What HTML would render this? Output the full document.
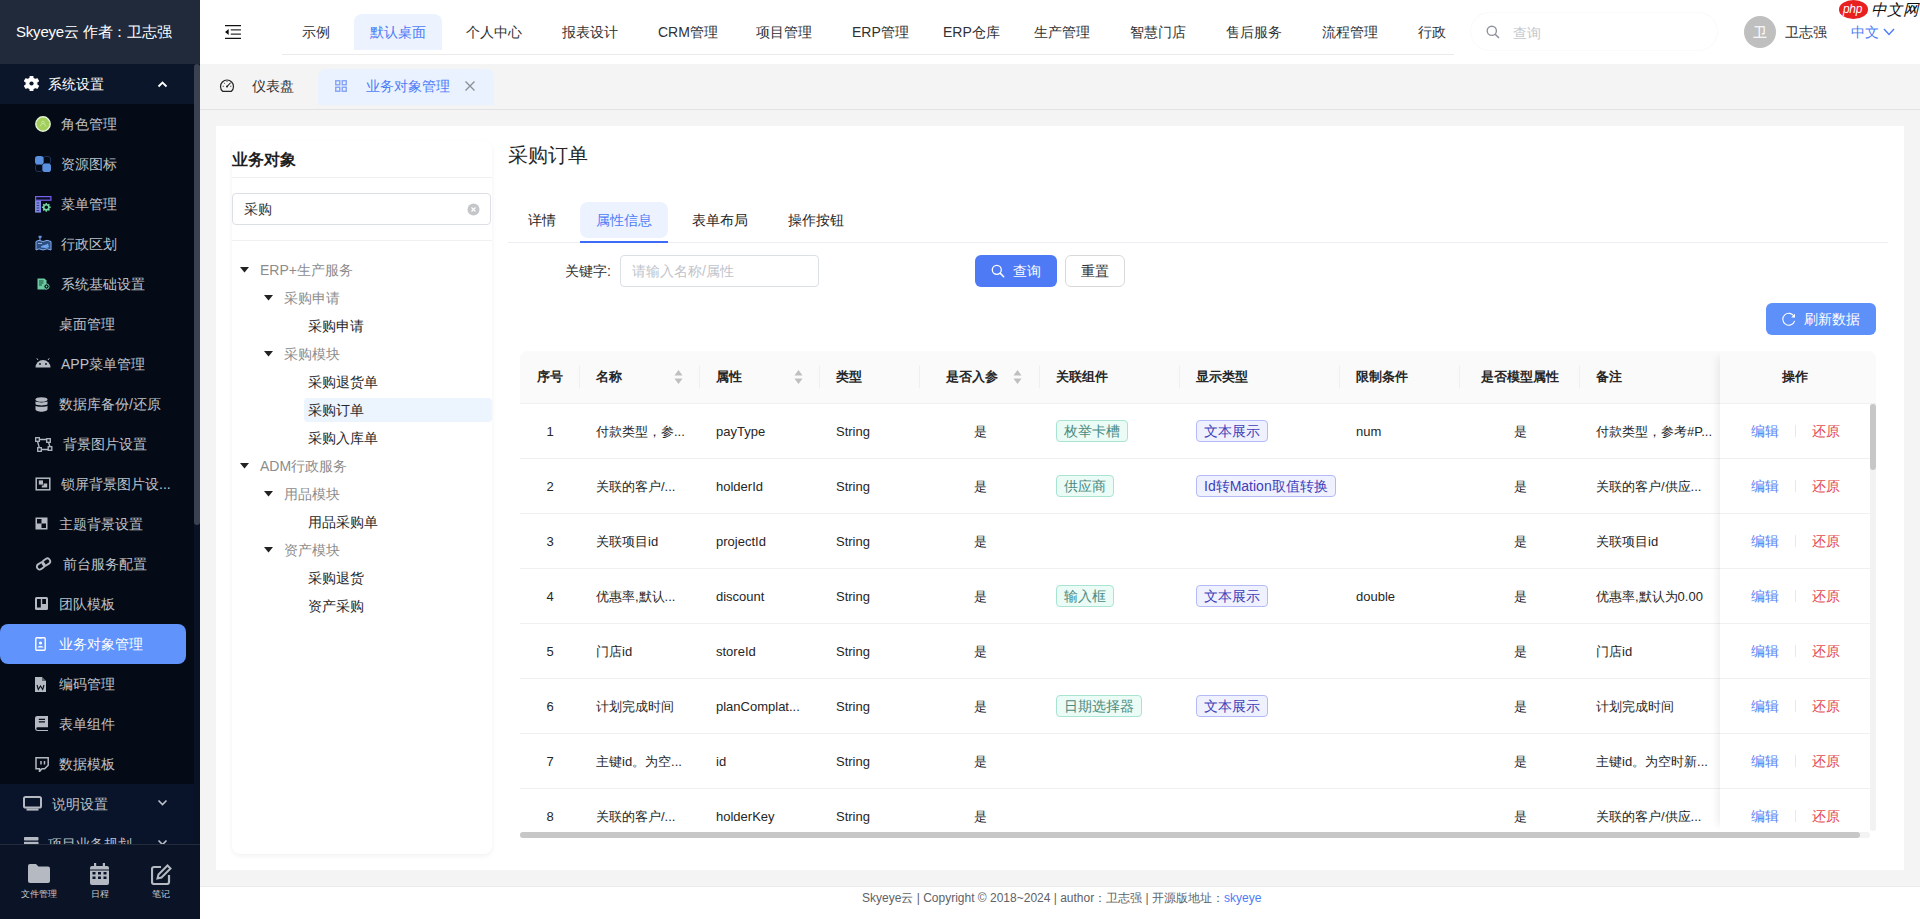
<!DOCTYPE html><html><head><meta charset="utf-8"><style>
*{box-sizing:border-box;margin:0;padding:0}
html,body{width:1920px;height:919px;overflow:hidden;background:#f4f4f4;font-family:"Liberation Sans",sans-serif;color:#303133}
.abs{position:absolute}
.t{position:absolute;white-space:nowrap;line-height:1}
svg{position:absolute;display:block}
</style></head><body>
<div class="abs" style="left:0;top:0;width:200px;height:919px;background:#050b16"></div>
<div class="abs" style="left:0;top:0;width:200px;height:64px;background:#212a3b"></div>
<div class="t" style="left:16px;top:24px;font-size:15px;color:#fff;letter-spacing:-0.2px">Skyeye云 作者：卫志强</div>
<div class="abs" style="left:0;top:64px;width:194px;height:40px;background:#0b162b"></div>
<svg style="left:23.5px;top:76px" width="15" height="15" viewBox="0 0 15 15"><path fill="#fff" stroke="#fff" stroke-width="1.2" stroke-linejoin="round" d="M5.97 2.32 L6.23 0.21 L8.77 0.21 L9.03 2.32 L11.22 3.58 L13.18 2.75 L14.45 4.96 L12.75 6.24 L12.75 8.76 L14.45 10.04 L13.18 12.25 L11.22 11.42 L9.03 12.68 L8.77 14.79 L6.23 14.79 L5.97 12.68 L3.78 11.42 L1.82 12.25 L0.55 10.04 L2.25 8.76 L2.25 6.24 L0.55 4.96 L1.82 2.75 L3.78 3.58Z"/><circle cx="7.5" cy="7.5" r="2.1" fill="#0b162b"/></svg>
<div class="t" style="left:48px;top:77px;font-size:14px;color:#fff">系统设置</div>
<svg style="left:157px;top:80px" width="11" height="8" viewBox="0 0 11 8"><path d="M1.5 6.5 L5.5 2.5 L9.5 6.5" stroke="#fff" stroke-width="1.8" fill="none"/></svg>
<svg style="left:35px;top:116px" width="16" height="16" viewBox="0 0 16 16"><circle cx="8" cy="8" r="7.2" fill="#a2cf5c" stroke="#e4f3d2" stroke-width="1.4"/><path d="M8 5.2a1.3 1.3 0 1 1 0 2.6a1.3 1.3 0 1 1 0-2.6M6.8 7.6L5 10.5M9.2 7.6L11 10.5" stroke="#d8edbf" stroke-width=".7" fill="none"/></svg>
<div class="t" style="left:61px;top:117px;font-size:14px;color:#bdc1c9">角色管理</div>
<svg style="left:35px;top:156px" width="16" height="16" viewBox="0 0 16 16"><rect x="8" y=".5" width="7.5" height="7.5" rx="2.5" fill="none" stroke="#1f3558" stroke-width="1"/><rect x=".5" y="8" width="7.5" height="7.5" rx="2.5" fill="none" stroke="#1f3558" stroke-width="1"/><rect x="0" y="0" width="8.6" height="8.6" rx="2.8" fill="#5a90de"/><rect x="7.4" y="7.4" width="8.6" height="8.6" rx="2.8" fill="#5a90de"/></svg>
<div class="t" style="left:61px;top:157px;font-size:14px;color:#bdc1c9">资源图标</div>
<svg style="left:35px;top:196px" width="17" height="17" viewBox="0 0 17 17"><rect x=".6" y=".6" width="15.3" height="3.6" fill="#081025" stroke="#7a5ff0" stroke-width="1.2"/><rect x="0" y="4.6" width="6" height="12" fill="#7d88e6"/><path d="M1.6 7h2.6M1.6 9.5h2.6M1.6 12h2.6M1.6 14.5h2.6" stroke="#2d3270" stroke-width=".9"/><circle cx="11.3" cy="11.3" r="2.6" fill="none" stroke="#74d6a4" stroke-width="1.6"/><g stroke="#74d6a4" stroke-width="1.5"><path d="M11.3 6.9v1.6M11.3 14.1v1.6M6.9 11.3h1.6M14.1 11.3h1.6M8.2 8.2l1.1 1.1M13.3 13.3l1.1 1.1M8.2 14.4l1.1-1.1M13.3 9.3l1.1-1.1"/></g></svg>
<div class="t" style="left:61px;top:197px;font-size:14px;color:#bdc1c9">菜单管理</div>
<svg style="left:35px;top:235px" width="17" height="17" viewBox="0 0 17 17"><path d="M5 1.5v4" stroke="#6e9be0" stroke-width="1.2"/><rect x="3.6" y="0.8" width="3" height="2" fill="#6e9be0"/><path d="M1 6.5l3-1.2 4 1.2 4-1.2 4 1.2v8.5l-4-1.2-4 1.2-4-1.2-3 1.2z" fill="#2e4f80" stroke="#86aef0" stroke-width="1"/><path d="M6 11.5c2-2 5-1 7-3l1 3.5c-2 1.5-5 1-8 .5z" fill="#6fa6ee"/><path d="M3 8.5h4" stroke="#a6c6f5" stroke-width=".8"/></svg>
<div class="t" style="left:61px;top:237px;font-size:14px;color:#bdc1c9">行政区划</div>
<svg style="left:37px;top:278px" width="13" height="12" viewBox="0 0 13 12"><path d="M0.5 0.5h7l2 2v9h-9z" fill="#6dcba3"/><path d="M2 3h4.5M2 5h4.5M2 7h3" stroke="#0b3a2a" stroke-width=".9"/><circle cx="9.5" cy="8.5" r="2.6" fill="#050b16" stroke="#6dcba3" stroke-width="1"/><circle cx="9.5" cy="8.5" r=".9" fill="#6dcba3"/></svg>
<div class="t" style="left:61px;top:277px;font-size:14px;color:#bdc1c9">系统基础设置</div>
<div class="t" style="left:59px;top:317px;font-size:14px;color:#bdc1c9">桌面管理</div>
<svg style="left:35px;top:358px" width="16" height="10" viewBox="0 0 16 10"><path d="M0.5 9.5a7.5 7.5 0 0 1 15 0z" fill="#b5b9c1"/><path d="M3 2L1.8 .3M13 2l1.2-1.7" stroke="#b5b9c1" stroke-width="1"/><circle cx="5" cy="6" r=".9" fill="#050b16"/><circle cx="11" cy="6" r=".9" fill="#050b16"/></svg>
<div class="t" style="left:61px;top:357px;font-size:14px;color:#bdc1c9">APP菜单管理</div>
<svg style="left:35px;top:397px" width="13" height="15" viewBox="0 0 13 15"><ellipse cx="6.5" cy="2.5" rx="6" ry="2.3" fill="#b5b9c1"/><path d="M.5 4.3c1 1.5 11 1.5 12 0v3c-1 1.5-11 1.5-12 0z" fill="#b5b9c1"/><path d="M.5 8.7c1 1.5 11 1.5 12 0v3.5c0 1.5-3 2.5-6 2.5s-6-1-6-2.5z" fill="#b5b9c1"/></svg>
<div class="t" style="left:59px;top:397px;font-size:14px;color:#bdc1c9">数据库备份/还原</div>
<svg style="left:35px;top:437px" width="18" height="15" viewBox="0 0 18 15"><rect x=".7" y=".7" width="3.6" height="3.6" fill="none" stroke="#b5b9c1" stroke-width="1.3"/><rect x="11.7" y="1.7" width="3.6" height="3.6" fill="none" stroke="#b5b9c1" stroke-width="1.3"/><rect x="2.7" y="10.7" width="3.6" height="3.6" fill="none" stroke="#b5b9c1" stroke-width="1.3"/><rect x="13.2" y="9.7" width="3.6" height="3.6" fill="none" stroke="#b5b9c1" stroke-width="1.3"/><path d="M4.3 2.5h7.4M2.5 4.3l1.8 6.4M6.3 12.5h6.9M13.5 5.3l1.5 4.4" stroke="#b5b9c1" stroke-width="1.3"/></svg>
<div class="t" style="left:63px;top:437px;font-size:14px;color:#bdc1c9">背景图片设置</div>
<svg style="left:35px;top:477px" width="16" height="14" viewBox="0 0 16 14"><rect x="1.2" y="1.2" width="13.6" height="11.6" fill="none" stroke="#b5b9c1" stroke-width="1.5"/><rect x="3.8" y="3.4" width="4.2" height="4.2" fill="#b5b9c1"/><path d="M8.6 6.4h3.6v4.2H6.8V8.6h1.8z" fill="#b5b9c1"/></svg>
<div class="t" style="left:61px;top:477px;font-size:14px;color:#bdc1c9">锁屏背景图片设...</div>
<svg style="left:35px;top:517px" width="13" height="13" viewBox="0 0 13 13"><rect x=".5" y=".5" width="12" height="12" fill="#b5b9c1"/><rect x="2" y="2" width="4.5" height="4.5" fill="#050b16"/><rect x="6.5" y="6.5" width="4.5" height="4.5" fill="#050b16"/></svg>
<div class="t" style="left:59px;top:517px;font-size:14px;color:#bdc1c9">主题背景设置</div>
<svg style="left:35px;top:557px" width="17" height="14" viewBox="0 0 17 14"><g transform="rotate(-35 8.5 7)" fill="none" stroke="#b5b9c1" stroke-width="1.9"><rect x="1" y="4.2" width="8.2" height="5.6" rx="2.8"/><rect x="7.8" y="4.2" width="8.2" height="5.6" rx="2.8"/></g></svg>
<div class="t" style="left:63px;top:557px;font-size:14px;color:#bdc1c9">前台服务配置</div>
<svg style="left:35px;top:597px" width="13" height="13" viewBox="0 0 13 13"><rect x="0" y="0" width="13" height="13" rx="1.5" fill="#b5b9c1"/><rect x="2" y="2" width="3.8" height="8.5" fill="#050b16"/><rect x="7.2" y="2" width="3.8" height="5" fill="#050b16"/></svg>
<div class="t" style="left:59px;top:597px;font-size:14px;color:#bdc1c9">团队模板</div>
<div class="abs" style="left:0;top:624px;width:186px;height:40px;background:#6093fb;border-radius:8px"></div>
<svg style="left:35px;top:637px" width="11" height="14" viewBox="0 0 11 14"><rect x=".8" y=".8" width="9.4" height="12.4" rx="1" fill="none" stroke="#fff" stroke-width="1.4"/><circle cx="5.5" cy="6" r="1.6" fill="#fff"/><path d="M2.5 10.5c.5-2 5.5-2 6 0z" fill="#fff"/><path d="M4 .8h3" stroke="#fff" stroke-width="1.4"/></svg>
<div class="t" style="left:59px;top:637px;font-size:14px;color:#fff">业务对象管理</div>
<svg style="left:35px;top:677px" width="11" height="15" viewBox="0 0 11 15"><path d="M0 0h7l4 4v11H0z" fill="#b5b9c1"/><path d="M7 0v4h4" fill="#050b16" opacity=".5"/><path d="M2 8l1.3 4.5 2.2-3.5 2.2 3.5L9 8" stroke="#050b16" stroke-width="1.1" fill="none"/></svg>
<div class="t" style="left:59px;top:677px;font-size:14px;color:#bdc1c9">编码管理</div>
<svg style="left:35px;top:716px" width="13" height="15" viewBox="0 0 13 15"><path d="M2.2 0H13v11.3H2.6a1.3 1.3 0 0 0 0 2.6H13V15H2.4A2.4 2.4 0 0 1 0 12.6V2.2A2.2 2.2 0 0 1 2.2 0z" fill="#b5b9c1"/><path d="M3.8 3.3h6.2M3.8 5.8h6.2" stroke="#050b16" stroke-width="1.2"/></svg>
<div class="t" style="left:59px;top:717px;font-size:14px;color:#bdc1c9">表单组件</div>
<svg style="left:35px;top:757px" width="14" height="15" viewBox="0 0 14 15"><path d="M1 .8h12.2v7.5l-3.5 3.5H7l-2.5 2.7v-2.7H1z" fill="none" stroke="#b5b9c1" stroke-width="1.5"/><path d="M6 4v3.5M9.5 4v3.5" stroke="#b5b9c1" stroke-width="1.5"/></svg>
<div class="t" style="left:59px;top:757px;font-size:14px;color:#bdc1c9">数据模板</div>
<div class="abs" style="left:0;top:784px;width:194px;height:80px;background:#09142a"></div>
<svg style="left:23px;top:796px" width="19" height="15" viewBox="0 0 19 15"><rect x="1" y="1" width="17" height="10.6" rx="1.6" fill="none" stroke="#b5b9c1" stroke-width="2"/><rect x="3.5" y="12.4" width="12" height="2.2" fill="#b5b9c1"/></svg>
<div class="t" style="left:52px;top:797px;font-size:14px;color:#bdc1c9">说明设置</div>
<svg style="left:157px;top:799px" width="11" height="8" viewBox="0 0 11 8"><path d="M1.5 1.5 L5.5 5.5 L9.5 1.5" stroke="#bdc1c9" stroke-width="1.6" fill="none"/></svg>
<svg style="left:24px;top:837px" width="15" height="8" viewBox="0 0 15 8"><rect x="0" y="0" width="14.5" height="3.6" rx=".8" fill="#b5b9c1"/><rect x="0" y="4.8" width="14.5" height="3.2" fill="#b5b9c1"/></svg>
<div class="t" style="left:48px;top:837px;font-size:14px;color:#bdc1c9">项目业务规划</div>
<svg style="left:157px;top:839px" width="11" height="8" viewBox="0 0 11 8"><path d="M1.5 1.5 L5.5 5.5 L9.5 1.5" stroke="#bdc1c9" stroke-width="1.6" fill="none"/></svg>
<div class="abs" style="left:194px;top:64px;width:6px;height:781px;background:#0a1326"></div>
<div class="abs" style="left:194px;top:64px;width:6px;height:461px;background:#3a4252;border-radius:3px"></div>
<div class="abs" style="left:0;top:844px;width:200px;height:75px;background:#0b1427;border-top:1px solid #242c3c"></div>
<svg style="left:28px;top:864px" width="22" height="19" viewBox="0 0 22 19"><path d="M0 2a2 2 0 0 1 2-2h6l2.5 2.5H20a2 2 0 0 1 2 2V17a2 2 0 0 1-2 2H2a2 2 0 0 1-2-2z" fill="#b5b9c1"/></svg>
<svg style="left:90px;top:863px" width="19" height="22" viewBox="0 0 19 22"><rect x="0" y="3" width="19" height="19" rx="2" fill="#b5b9c1"/><rect x="4" y="0" width="2.2" height="5" fill="#b5b9c1"/><rect x="12.8" y="0" width="2.2" height="5" fill="#b5b9c1"/><g fill="#0b1427"><rect x="2.5" y="9" width="3" height="2.5"/><rect x="8" y="9" width="3" height="2.5"/><rect x="13.5" y="9" width="3" height="2.5"/><rect x="2.5" y="13.5" width="3" height="2.5"/><rect x="8" y="13.5" width="3" height="2.5"/><rect x="13.5" y="13.5" width="3" height="2.5"/></g><rect x="0" y="6.5" width="19" height="1" fill="#0b1427"/></svg>
<svg style="left:151px;top:864px" width="21" height="21" viewBox="0 0 21 21"><path d="M10 3H3a2 2 0 0 0-2 2v13a2 2 0 0 0 2 2h13a2 2 0 0 0 2-2v-7" stroke="#b5b9c1" stroke-width="2.2" fill="none"/><path d="M16.5 1.5l3 3-9 9-4 1 1-4z" stroke="#b5b9c1" stroke-width="2" fill="none"/></svg>
<div class="t" style="left:21px;top:890px;font-size:9px;color:#c8ccd3">文件管理</div>
<div class="t" style="left:91px;top:890px;font-size:9px;color:#c8ccd3">日程</div>
<div class="t" style="left:152px;top:890px;font-size:9px;color:#c8ccd3">笔记</div>
<div class="abs" style="left:200px;top:0;width:1720px;height:64px;background:#fff"></div>
<svg style="left:225px;top:25px" width="16" height="14" viewBox="0 0 16 14"><path d="M0 .7h16M0 13.4h16" stroke="#111" stroke-width="1.3"/><path d="M5.8 4.8h10.2M5.8 9.2h10.2" stroke="#333" stroke-width="1.2"/><path d="M0 7l3.7-3v6z" fill="#111"/></svg>
<div class="abs" style="left:282px;top:54px;width:1172px;height:1px;background:#ebebeb"></div>
<div class="t" style="left:302px;top:25px;font-size:14px;color:#303133">示例</div>
<div class="abs" style="left:354px;top:14px;width:88px;height:36px;background:#ecf3fe;border-radius:8px 8px 0 0"></div>
<div class="t" style="left:370px;top:25px;font-size:14px;color:#4d7cf6">默认桌面</div>
<div class="t" style="left:466px;top:25px;font-size:14px;color:#303133">个人中心</div>
<div class="t" style="left:562px;top:25px;font-size:14px;color:#303133">报表设计</div>
<div class="t" style="left:658px;top:25px;font-size:14px;color:#303133">CRM管理</div>
<div class="t" style="left:756px;top:25px;font-size:14px;color:#303133">项目管理</div>
<div class="t" style="left:852px;top:25px;font-size:14px;color:#303133">ERP管理</div>
<div class="t" style="left:943px;top:25px;font-size:14px;color:#303133">ERP仓库</div>
<div class="t" style="left:1034px;top:25px;font-size:14px;color:#303133">生产管理</div>
<div class="t" style="left:1130px;top:25px;font-size:14px;color:#303133">智慧门店</div>
<div class="t" style="left:1226px;top:25px;font-size:14px;color:#303133">售后服务</div>
<div class="t" style="left:1322px;top:25px;font-size:14px;color:#303133">流程管理</div>
<div class="t" style="left:1418px;top:25px;font-size:14px;color:#303133">行政</div>
<div class="abs" style="left:1470px;top:12px;width:248px;height:39px;border:1px solid #fafafa;border-radius:20px"></div>
<svg style="left:1486px;top:25px" width="14" height="14" viewBox="0 0 14 14"><circle cx="5.8" cy="5.8" r="4.6" stroke="#8f949c" stroke-width="1.4" fill="none"/><path d="M9.2 9.2l3.8 3.8" stroke="#8f949c" stroke-width="1.6"/></svg>
<div class="t" style="left:1513px;top:26px;font-size:14px;color:#c4c7cc">查询</div>
<div class="abs" style="left:1744px;top:16px;width:32px;height:32px;border-radius:50%;background:#bfbfbf"></div>
<div class="t" style="left:1753px;top:25px;font-size:14px;color:#fff">卫</div>
<div class="t" style="left:1785px;top:25px;font-size:14px;color:#303133">卫志强</div>
<div class="t" style="left:1851px;top:25px;font-size:14px;color:#4d7cf6">中文</div>
<svg style="left:1883px;top:28px" width="12" height="8" viewBox="0 0 12 8"><path d="M1 1l5 5.5L11 1" stroke="#4d7cf6" stroke-width="1.4" fill="none"/></svg>
<div class="abs" style="left:1839px;top:0px;width:29px;height:19px;border-radius:50%;background:#e8201f"></div>
<div class="t" style="left:1843px;top:3px;font-size:12px;color:#fff;font-style:italic;letter-spacing:-0.3px">php</div>
<div class="t" style="left:1871px;top:2px;font-size:15.5px;color:#111;font-style:italic">中文网</div>
<div class="abs" style="left:200px;top:109px;width:1720px;height:1px;background:#e2e2e2"></div>
<svg style="left:219px;top:78px" width="16" height="15" viewBox="0 0 16 15"><path d="M3.6 13.3A6.5 6.5 0 1 1 12.4 13.3Z" stroke="#262626" stroke-width="1.2" fill="none" stroke-linejoin="round"/><path d="M8 8.6L11.3 5" stroke="#262626" stroke-width="1.1" stroke-linecap="round"/><circle cx="8" cy="8.6" r="1" fill="#262626"/><path d="M3.7 8.3h1M4.9 4.8l.8.7M8 3.2v.8M12.3 8.3h-1" stroke="#262626" stroke-width="1"/></svg>
<div class="t" style="left:252px;top:79px;font-size:14px;color:#303133">仪表盘</div>
<div class="abs" style="left:318px;top:69px;width:176px;height:36px;background:#e9f2fe;border-radius:8px 8px 0 0"></div>
<svg style="left:335px;top:80px" width="12" height="12" viewBox="0 0 12 12"><g fill="none" stroke="#86a3f7" stroke-width="1.4"><rect x=".75" y=".75" width="4" height="4"/><rect x="7.25" y=".75" width="4" height="4"/><rect x=".75" y="7.25" width="4" height="4"/><rect x="7.25" y="7.25" width="4" height="4"/></g></svg>
<div class="t" style="left:366px;top:79px;font-size:14px;color:#4d7cf6">业务对象管理</div>
<svg style="left:465px;top:81px" width="10" height="10" viewBox="0 0 10 10"><path d="M.5 .5l9 9M9.5 .5l-9 9" stroke="#8c8f95" stroke-width="1.3"/></svg>
<div class="abs" style="left:216px;top:126px;width:1688px;height:744px;background:#fff"></div>
<div class="abs" style="left:232px;top:141px;width:260px;height:713px;background:#fff;border-radius:8px;box-shadow:0 2px 5px rgba(0,0,0,.06)"></div>
<div class="t" style="left:232px;top:152px;font-size:16px;font-weight:bold;color:#1f1f1f">业务对象</div>
<div class="abs" style="left:232px;top:177px;width:260px;height:1px;background:#f0f0f0"></div>
<div class="abs" style="left:232px;top:193px;width:259px;height:32px;border:1px solid #dcdfe6;border-radius:4px"></div>
<div class="t" style="left:244px;top:202px;font-size:14px;color:#303133">采购</div>
<svg style="left:467px;top:203px" width="13" height="13" viewBox="0 0 13 13"><circle cx="6.5" cy="6.5" r="6" fill="#c4c6ca"/><path d="M4.5 4.5l4 4M8.5 4.5l-4 4" stroke="#fff" stroke-width="1.1"/></svg>
<div class="abs" style="left:232px;top:240px;width:260px;height:1px;background:#f0f0f0"></div>
<svg style="left:240px;top:266.5px" width="9" height="6" viewBox="0 0 9 6"><path d="M0 0h9L4.5 5.5z" fill="#222"/></svg>
<div class="t" style="left:260px;top:262.5px;font-size:14px;color:#8c8c8c">ERP+生产服务</div>
<svg style="left:264px;top:294.5px" width="9" height="6" viewBox="0 0 9 6"><path d="M0 0h9L4.5 5.5z" fill="#222"/></svg>
<div class="t" style="left:284px;top:290.5px;font-size:14px;color:#8c8c8c">采购申请</div>
<div class="t" style="left:308px;top:318.5px;font-size:14px;color:#262626">采购申请</div>
<svg style="left:264px;top:350.5px" width="9" height="6" viewBox="0 0 9 6"><path d="M0 0h9L4.5 5.5z" fill="#222"/></svg>
<div class="t" style="left:284px;top:346.5px;font-size:14px;color:#8c8c8c">采购模块</div>
<div class="t" style="left:308px;top:374.5px;font-size:14px;color:#262626">采购退货单</div>
<div class="abs" style="left:304px;top:397.5px;width:188px;height:24px;background:#ecf4fe;border-radius:4px"></div>
<div class="t" style="left:308px;top:402.5px;font-size:14px;color:#262626">采购订单</div>
<div class="t" style="left:308px;top:430.5px;font-size:14px;color:#262626">采购入库单</div>
<svg style="left:240px;top:462.5px" width="9" height="6" viewBox="0 0 9 6"><path d="M0 0h9L4.5 5.5z" fill="#222"/></svg>
<div class="t" style="left:260px;top:458.5px;font-size:14px;color:#8c8c8c">ADM行政服务</div>
<svg style="left:264px;top:490.5px" width="9" height="6" viewBox="0 0 9 6"><path d="M0 0h9L4.5 5.5z" fill="#222"/></svg>
<div class="t" style="left:284px;top:486.5px;font-size:14px;color:#8c8c8c">用品模块</div>
<div class="t" style="left:308px;top:514.5px;font-size:14px;color:#262626">用品采购单</div>
<svg style="left:264px;top:546.5px" width="9" height="6" viewBox="0 0 9 6"><path d="M0 0h9L4.5 5.5z" fill="#222"/></svg>
<div class="t" style="left:284px;top:542.5px;font-size:14px;color:#8c8c8c">资产模块</div>
<div class="t" style="left:308px;top:570.5px;font-size:14px;color:#262626">采购退货</div>
<div class="t" style="left:308px;top:598.5px;font-size:14px;color:#262626">资产采购</div>
<div class="t" style="left:508px;top:145px;font-size:20px;color:#262626">采购订单</div>
<div class="abs" style="left:508px;top:242px;width:1380px;height:1px;background:#eceef2"></div>
<div class="t" style="left:528px;top:213px;font-size:14px;color:#262626">详情</div>
<div class="abs" style="left:580px;top:202px;width:88px;height:36px;background:#ecf3fe;border-radius:8px"></div>
<div class="abs" style="left:580px;top:241px;width:88px;height:2px;background:#3d6af7"></div>
<div class="t" style="left:596px;top:213px;font-size:14px;color:#4d7cf6">属性信息</div>
<div class="t" style="left:692px;top:213px;font-size:14px;color:#262626">表单布局</div>
<div class="t" style="left:788px;top:213px;font-size:14px;color:#262626">操作按钮</div>
<div class="t" style="left:565px;top:264px;font-size:14px;color:#303133">关键字:</div>
<div class="abs" style="left:620px;top:255px;width:199px;height:32px;border:1px solid #dcdfe6;border-radius:4px"></div>
<div class="t" style="left:632px;top:264px;font-size:14px;color:#c0c4cc">请输入名称/属性</div>
<div class="abs" style="left:975px;top:255px;width:82px;height:32px;background:#4e7af6;border-radius:6px"></div>
<svg style="left:991px;top:264px" width="14" height="14" viewBox="0 0 14 14"><circle cx="5.8" cy="5.8" r="4.5" stroke="#fff" stroke-width="1.3" fill="none"/><path d="M9.1 9.1l3.6 3.6" stroke="#fff" stroke-width="1.5" stroke-linecap="round"/></svg>
<div class="t" style="left:1013px;top:264px;font-size:14px;color:#fff">查询</div>
<div class="abs" style="left:1065px;top:255px;width:60px;height:32px;border:1px solid #d9d9d9;border-radius:6px;background:#fff"></div>
<div class="t" style="left:1081px;top:264px;font-size:14px;color:#303133">重置</div>
<div class="abs" style="left:1766px;top:303px;width:110px;height:32px;background:#5e90fa;border-radius:6px"></div>
<svg style="left:1782px;top:312px" width="14" height="14" viewBox="0 0 14 14"><path d="M12.2 4.6A6 6 0 1 0 12.6 8.8" stroke="#fff" stroke-width="1.1" fill="none"/><path d="M13 1.8v3.8H9.2z" fill="#fff"/></svg>
<div class="t" style="left:1804px;top:312px;font-size:14px;color:#fff">刷新数据</div>
<div class="abs" style="left:520px;top:351px;width:1356px;height:480px;overflow:hidden">
<div class="abs" style="left:0;top:0;width:1356px;height:52px;background:#fafafa;border-radius:8px 8px 0 0"></div>
<div class="abs" style="left:0;top:52px;width:1356px;height:1px;background:#f0f0f0"></div>
<div class="abs" style="left:0;top:107px;width:1350px;height:1px;background:#f0f0f0"></div>
<div class="abs" style="left:0;top:162px;width:1350px;height:1px;background:#f0f0f0"></div>
<div class="abs" style="left:0;top:217px;width:1350px;height:1px;background:#f0f0f0"></div>
<div class="abs" style="left:0;top:272px;width:1350px;height:1px;background:#f0f0f0"></div>
<div class="abs" style="left:0;top:327px;width:1350px;height:1px;background:#f0f0f0"></div>
<div class="abs" style="left:0;top:382px;width:1350px;height:1px;background:#f0f0f0"></div>
<div class="abs" style="left:0;top:437px;width:1350px;height:1px;background:#f0f0f0"></div>
<div class="abs" style="left:0;top:492px;width:1350px;height:1px;background:#f0f0f0"></div>
<div class="t" style="left:0px;top:19px;width:60px;text-align:center;font-size:13px;font-weight:bold;color:#262626">序号</div>
<div class="abs" style="left:59px;top:15px;width:1px;height:22px;background:#efefef"></div>
<div class="t" style="left:76px;top:19px;font-size:13px;font-weight:bold;color:#262626">名称</div>
<svg style="left:154px;top:19px" width="9" height="14" viewBox="0 0 9 14"><path d="M4.5 0L8.5 5.5H.5z" fill="#bfbfbf"/><path d="M4.5 14L8.5 8.5H.5z" fill="#bfbfbf"/></svg>
<div class="abs" style="left:179px;top:15px;width:1px;height:22px;background:#efefef"></div>
<div class="t" style="left:196px;top:19px;font-size:13px;font-weight:bold;color:#262626">属性</div>
<svg style="left:274px;top:19px" width="9" height="14" viewBox="0 0 9 14"><path d="M4.5 0L8.5 5.5H.5z" fill="#bfbfbf"/><path d="M4.5 14L8.5 8.5H.5z" fill="#bfbfbf"/></svg>
<div class="abs" style="left:299px;top:15px;width:1px;height:22px;background:#efefef"></div>
<div class="t" style="left:316px;top:19px;font-size:13px;font-weight:bold;color:#262626">类型</div>
<div class="abs" style="left:399px;top:15px;width:1px;height:22px;background:#efefef"></div>
<div class="t" style="left:426px;top:19px;font-size:13px;font-weight:bold;color:#262626">是否入参</div>
<svg style="left:493px;top:19px" width="9" height="14" viewBox="0 0 9 14"><path d="M4.5 0L8.5 5.5H.5z" fill="#bfbfbf"/><path d="M4.5 14L8.5 8.5H.5z" fill="#bfbfbf"/></svg>
<div class="abs" style="left:519px;top:15px;width:1px;height:22px;background:#efefef"></div>
<div class="t" style="left:536px;top:19px;font-size:13px;font-weight:bold;color:#262626">关联组件</div>
<div class="abs" style="left:659px;top:15px;width:1px;height:22px;background:#efefef"></div>
<div class="t" style="left:676px;top:19px;font-size:13px;font-weight:bold;color:#262626">显示类型</div>
<div class="abs" style="left:819px;top:15px;width:1px;height:22px;background:#efefef"></div>
<div class="t" style="left:836px;top:19px;font-size:13px;font-weight:bold;color:#262626">限制条件</div>
<div class="abs" style="left:939px;top:15px;width:1px;height:22px;background:#efefef"></div>
<div class="t" style="left:940px;top:19px;width:120px;text-align:center;font-size:13px;font-weight:bold;color:#262626">是否模型属性</div>
<div class="abs" style="left:1059px;top:15px;width:1px;height:22px;background:#efefef"></div>
<div class="t" style="left:1076px;top:19px;font-size:13px;font-weight:bold;color:#262626">备注</div>
<div class="abs" style="left:1200px;top:0;width:1px;height:52px;background:#efefef"></div>
<div class="t" style="left:0px;top:74px;width:60px;text-align:center;font-size:13px;color:#262626">1</div>
<div class="t" style="left:76px;top:74px;font-size:13px;color:#262626">付款类型，参...</div>
<div class="t" style="left:196px;top:74px;font-size:13px;color:#262626">payType</div>
<div class="t" style="left:316px;top:74px;font-size:13px;color:#262626">String</div>
<div class="t" style="left:400px;top:74px;width:120px;text-align:center;font-size:13px;color:#262626">是</div>
<div class="t" style="left:536px;top:69px;height:22px;padding:0 7px;border:1px solid #a9e4d3;background:#ebfbf6;color:#4a8a80;border-radius:4px;font-size:14px;line-height:20px">枚举卡槽</div>
<div class="t" style="left:676px;top:69px;height:22px;padding:0 7px;border:1px solid #b4baf6;background:#f0f1ff;color:#3d3fb8;border-radius:4px;font-size:14px;line-height:20px">文本展示</div>
<div class="t" style="left:836px;top:74px;font-size:13px;color:#262626">num</div>
<div class="t" style="left:940px;top:74px;width:120px;text-align:center;font-size:13px;color:#262626">是</div>
<div class="t" style="left:1076px;top:74px;font-size:13px;color:#262626">付款类型，参考#P...</div>
<div class="t" style="left:0px;top:129px;width:60px;text-align:center;font-size:13px;color:#262626">2</div>
<div class="t" style="left:76px;top:129px;font-size:13px;color:#262626">关联的客户/...</div>
<div class="t" style="left:196px;top:129px;font-size:13px;color:#262626">holderId</div>
<div class="t" style="left:316px;top:129px;font-size:13px;color:#262626">String</div>
<div class="t" style="left:400px;top:129px;width:120px;text-align:center;font-size:13px;color:#262626">是</div>
<div class="t" style="left:536px;top:124px;height:22px;padding:0 7px;border:1px solid #a9e4d3;background:#ebfbf6;color:#4a8a80;border-radius:4px;font-size:14px;line-height:20px">供应商</div>
<div class="t" style="left:676px;top:124px;height:22px;padding:0 7px;border:1px solid #b4baf6;background:#f0f1ff;color:#3d3fb8;border-radius:4px;font-size:14px;line-height:20px">Id转Mation取值转换</div>
<div class="t" style="left:940px;top:129px;width:120px;text-align:center;font-size:13px;color:#262626">是</div>
<div class="t" style="left:1076px;top:129px;font-size:13px;color:#262626">关联的客户/供应...</div>
<div class="t" style="left:0px;top:184px;width:60px;text-align:center;font-size:13px;color:#262626">3</div>
<div class="t" style="left:76px;top:184px;font-size:13px;color:#262626">关联项目id</div>
<div class="t" style="left:196px;top:184px;font-size:13px;color:#262626">projectId</div>
<div class="t" style="left:316px;top:184px;font-size:13px;color:#262626">String</div>
<div class="t" style="left:400px;top:184px;width:120px;text-align:center;font-size:13px;color:#262626">是</div>
<div class="t" style="left:940px;top:184px;width:120px;text-align:center;font-size:13px;color:#262626">是</div>
<div class="t" style="left:1076px;top:184px;font-size:13px;color:#262626">关联项目id</div>
<div class="t" style="left:0px;top:239px;width:60px;text-align:center;font-size:13px;color:#262626">4</div>
<div class="t" style="left:76px;top:239px;font-size:13px;color:#262626">优惠率,默认...</div>
<div class="t" style="left:196px;top:239px;font-size:13px;color:#262626">discount</div>
<div class="t" style="left:316px;top:239px;font-size:13px;color:#262626">String</div>
<div class="t" style="left:400px;top:239px;width:120px;text-align:center;font-size:13px;color:#262626">是</div>
<div class="t" style="left:536px;top:234px;height:22px;padding:0 7px;border:1px solid #a9e4d3;background:#ebfbf6;color:#4a8a80;border-radius:4px;font-size:14px;line-height:20px">输入框</div>
<div class="t" style="left:676px;top:234px;height:22px;padding:0 7px;border:1px solid #b4baf6;background:#f0f1ff;color:#3d3fb8;border-radius:4px;font-size:14px;line-height:20px">文本展示</div>
<div class="t" style="left:836px;top:239px;font-size:13px;color:#262626">double</div>
<div class="t" style="left:940px;top:239px;width:120px;text-align:center;font-size:13px;color:#262626">是</div>
<div class="t" style="left:1076px;top:239px;font-size:13px;color:#262626">优惠率,默认为0.00</div>
<div class="t" style="left:0px;top:294px;width:60px;text-align:center;font-size:13px;color:#262626">5</div>
<div class="t" style="left:76px;top:294px;font-size:13px;color:#262626">门店id</div>
<div class="t" style="left:196px;top:294px;font-size:13px;color:#262626">storeId</div>
<div class="t" style="left:316px;top:294px;font-size:13px;color:#262626">String</div>
<div class="t" style="left:400px;top:294px;width:120px;text-align:center;font-size:13px;color:#262626">是</div>
<div class="t" style="left:940px;top:294px;width:120px;text-align:center;font-size:13px;color:#262626">是</div>
<div class="t" style="left:1076px;top:294px;font-size:13px;color:#262626">门店id</div>
<div class="t" style="left:0px;top:349px;width:60px;text-align:center;font-size:13px;color:#262626">6</div>
<div class="t" style="left:76px;top:349px;font-size:13px;color:#262626">计划完成时间</div>
<div class="t" style="left:196px;top:349px;font-size:13px;color:#262626">planComplat...</div>
<div class="t" style="left:316px;top:349px;font-size:13px;color:#262626">String</div>
<div class="t" style="left:400px;top:349px;width:120px;text-align:center;font-size:13px;color:#262626">是</div>
<div class="t" style="left:536px;top:344px;height:22px;padding:0 7px;border:1px solid #a9e4d3;background:#ebfbf6;color:#4a8a80;border-radius:4px;font-size:14px;line-height:20px">日期选择器</div>
<div class="t" style="left:676px;top:344px;height:22px;padding:0 7px;border:1px solid #b4baf6;background:#f0f1ff;color:#3d3fb8;border-radius:4px;font-size:14px;line-height:20px">文本展示</div>
<div class="t" style="left:940px;top:349px;width:120px;text-align:center;font-size:13px;color:#262626">是</div>
<div class="t" style="left:1076px;top:349px;font-size:13px;color:#262626">计划完成时间</div>
<div class="t" style="left:0px;top:404px;width:60px;text-align:center;font-size:13px;color:#262626">7</div>
<div class="t" style="left:76px;top:404px;font-size:13px;color:#262626">主键id。为空...</div>
<div class="t" style="left:196px;top:404px;font-size:13px;color:#262626">id</div>
<div class="t" style="left:316px;top:404px;font-size:13px;color:#262626">String</div>
<div class="t" style="left:400px;top:404px;width:120px;text-align:center;font-size:13px;color:#262626">是</div>
<div class="t" style="left:940px;top:404px;width:120px;text-align:center;font-size:13px;color:#262626">是</div>
<div class="t" style="left:1076px;top:404px;font-size:13px;color:#262626">主键id。为空时新...</div>
<div class="t" style="left:0px;top:459px;width:60px;text-align:center;font-size:13px;color:#262626">8</div>
<div class="t" style="left:76px;top:459px;font-size:13px;color:#262626">关联的客户/...</div>
<div class="t" style="left:196px;top:459px;font-size:13px;color:#262626">holderKey</div>
<div class="t" style="left:316px;top:459px;font-size:13px;color:#262626">String</div>
<div class="t" style="left:400px;top:459px;width:120px;text-align:center;font-size:13px;color:#262626">是</div>
<div class="t" style="left:940px;top:459px;width:120px;text-align:center;font-size:13px;color:#262626">是</div>
<div class="t" style="left:1076px;top:459px;font-size:13px;color:#262626">关联的客户/供应...</div>
<div class="abs" style="left:1200px;top:0;width:150px;height:480px;background:transparent;box-shadow:-8px 0 8px -6px rgba(0,0,0,.08)"></div>
<div class="abs" style="left:1200px;top:0;width:156px;height:52px;background:#fafafa;border-radius:0 8px 0 0"></div>
<div class="t" style="left:1200px;top:19px;width:150px;text-align:center;font-size:13px;font-weight:bold;color:#262626">操作</div>
<div class="abs" style="left:1200px;top:52px;width:150px;height:428px;background:#fff"></div>
<div class="abs" style="left:1200px;top:52px;width:150px;height:1px;background:#f0f0f0"></div>
<div class="abs" style="left:1200px;top:107px;width:150px;height:1px;background:#f0f0f0"></div>
<div class="abs" style="left:1200px;top:162px;width:150px;height:1px;background:#f0f0f0"></div>
<div class="abs" style="left:1200px;top:217px;width:150px;height:1px;background:#f0f0f0"></div>
<div class="abs" style="left:1200px;top:272px;width:150px;height:1px;background:#f0f0f0"></div>
<div class="abs" style="left:1200px;top:327px;width:150px;height:1px;background:#f0f0f0"></div>
<div class="abs" style="left:1200px;top:382px;width:150px;height:1px;background:#f0f0f0"></div>
<div class="abs" style="left:1200px;top:437px;width:150px;height:1px;background:#f0f0f0"></div>
<div class="abs" style="left:1200px;top:492px;width:150px;height:1px;background:#f0f0f0"></div>
<div class="t" style="left:1231px;top:73px;font-size:14px;color:#5a7ff4">编辑</div>
<div class="abs" style="left:1275px;top:74px;width:1px;height:12px;background:#e8e8e8"></div>
<div class="t" style="left:1292px;top:73px;font-size:14px;color:#e24b50">还原</div>
<div class="t" style="left:1231px;top:128px;font-size:14px;color:#5a7ff4">编辑</div>
<div class="abs" style="left:1275px;top:129px;width:1px;height:12px;background:#e8e8e8"></div>
<div class="t" style="left:1292px;top:128px;font-size:14px;color:#e24b50">还原</div>
<div class="t" style="left:1231px;top:183px;font-size:14px;color:#5a7ff4">编辑</div>
<div class="abs" style="left:1275px;top:184px;width:1px;height:12px;background:#e8e8e8"></div>
<div class="t" style="left:1292px;top:183px;font-size:14px;color:#e24b50">还原</div>
<div class="t" style="left:1231px;top:238px;font-size:14px;color:#5a7ff4">编辑</div>
<div class="abs" style="left:1275px;top:239px;width:1px;height:12px;background:#e8e8e8"></div>
<div class="t" style="left:1292px;top:238px;font-size:14px;color:#e24b50">还原</div>
<div class="t" style="left:1231px;top:293px;font-size:14px;color:#5a7ff4">编辑</div>
<div class="abs" style="left:1275px;top:294px;width:1px;height:12px;background:#e8e8e8"></div>
<div class="t" style="left:1292px;top:293px;font-size:14px;color:#e24b50">还原</div>
<div class="t" style="left:1231px;top:348px;font-size:14px;color:#5a7ff4">编辑</div>
<div class="abs" style="left:1275px;top:349px;width:1px;height:12px;background:#e8e8e8"></div>
<div class="t" style="left:1292px;top:348px;font-size:14px;color:#e24b50">还原</div>
<div class="t" style="left:1231px;top:403px;font-size:14px;color:#5a7ff4">编辑</div>
<div class="abs" style="left:1275px;top:404px;width:1px;height:12px;background:#e8e8e8"></div>
<div class="t" style="left:1292px;top:403px;font-size:14px;color:#e24b50">还原</div>
<div class="t" style="left:1231px;top:458px;font-size:14px;color:#5a7ff4">编辑</div>
<div class="abs" style="left:1275px;top:459px;width:1px;height:12px;background:#e8e8e8"></div>
<div class="t" style="left:1292px;top:458px;font-size:14px;color:#e24b50">还原</div>
<div class="abs" style="left:1350px;top:53px;width:6px;height:427px;background:#f2f2f2;border-radius:0 0 3px 3px"></div>
<div class="abs" style="left:1350px;top:53px;width:6px;height:66px;background:#c7c7c7;border-radius:3px"></div>
</div>
<div class="abs" style="left:520px;top:832px;width:1350px;height:6px;background:#f3f3f3;border-radius:3px"></div>
<div class="abs" style="left:520px;top:832px;width:1340px;height:6px;background:#c7c7c7;border-radius:3px"></div>
<div class="abs" style="left:200px;top:886px;width:1720px;height:33px;background:#fff;border-top:1px solid #ebebeb"></div>
<div class="t" style="left:862px;top:892px;font-size:12px;color:#606266">Skyeye云 | Copyright © 2018~2024 | author：卫志强 | 开源版地址：<span style="color:#4d7cf6">skyeye</span></div>
</body></html>
